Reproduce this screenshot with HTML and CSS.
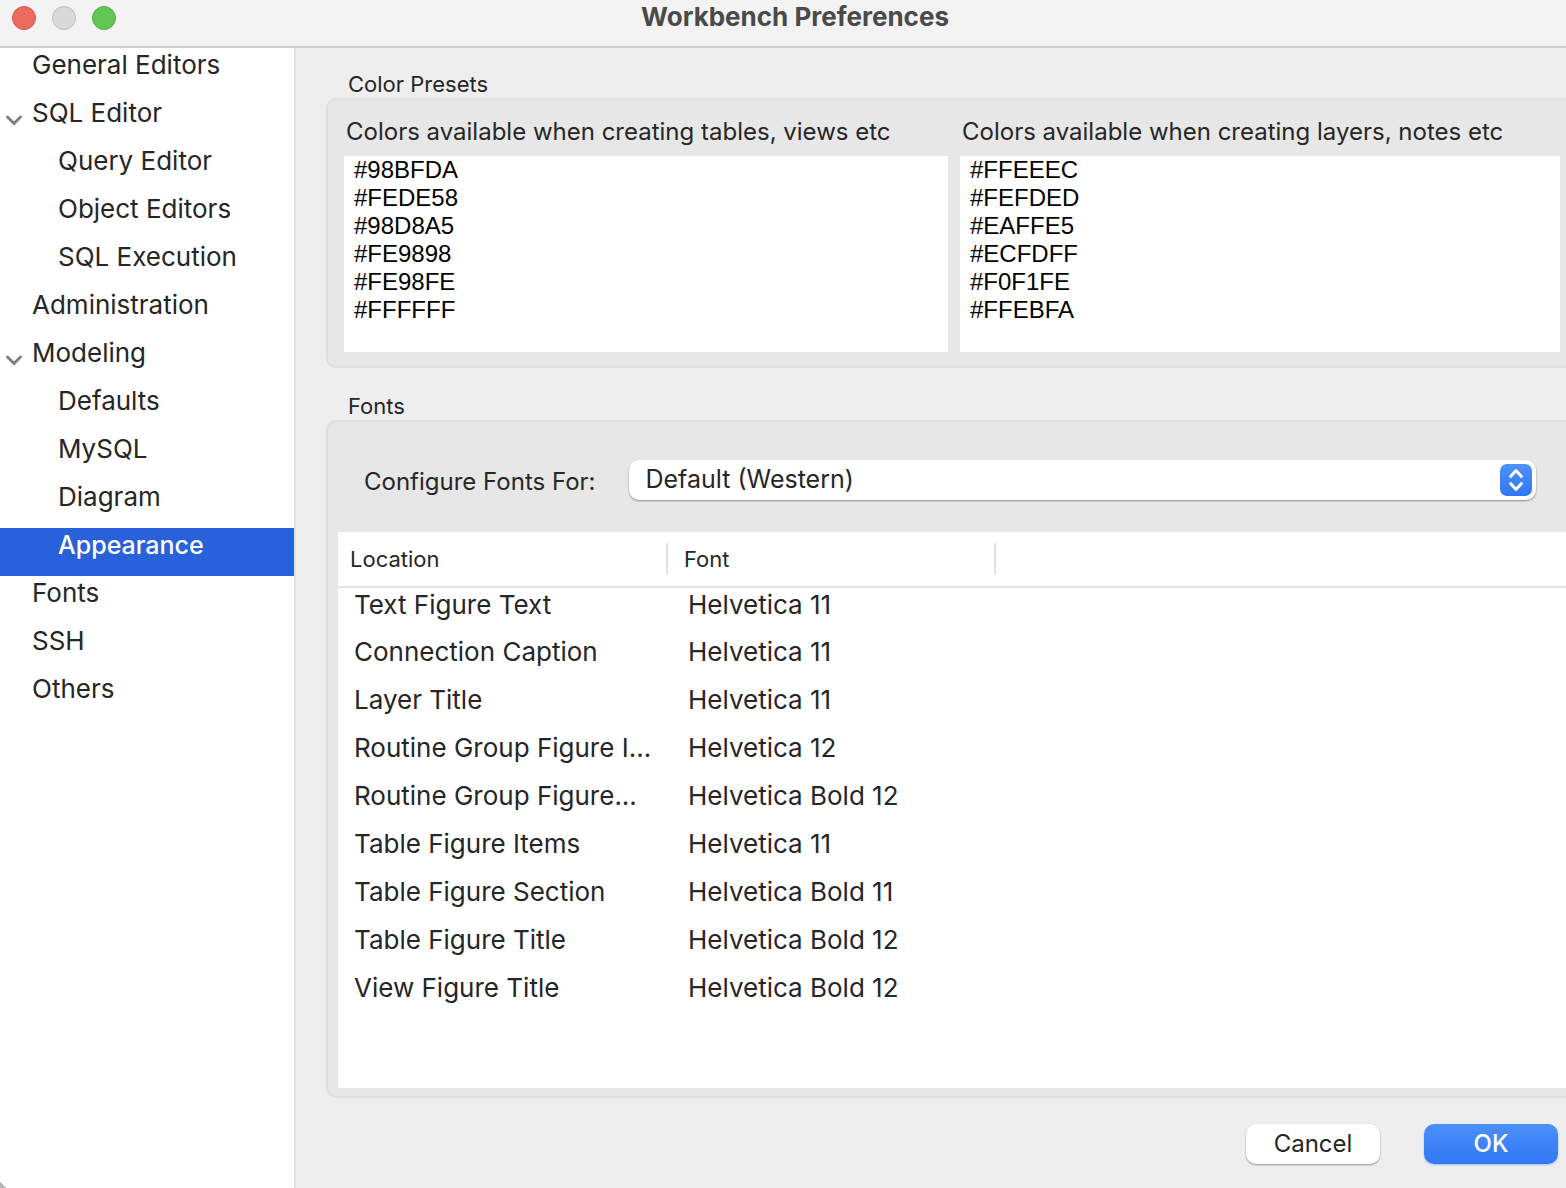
FILE: index.html
```html
<!DOCTYPE html>
<html lang="en">
<head>
<meta charset="utf-8">
<meta name="viewport" content="width=device-width, initial-scale=1">
<title>Workbench Preferences</title>
<link rel="stylesheet" href="styles.css">
</head>
<body>
<div class="window">
  <header class="titlebar">
    <div class="lights">
      <button class="light light-close" type="button" aria-label="Close"></button>
      <button class="light light-minimize" type="button" aria-label="Minimize" disabled></button>
      <button class="light light-zoom" type="button" aria-label="Zoom"></button>
    </div>
    <h1 class="title">Workbench Preferences</h1>
  </header>
  <div class="body">
    <nav class="sidebar" aria-label="Preference pages">
      <ul class="tree">
        <li><div class="row"><a href="#general">General Editors</a></div></li>
        <li>
          <div class="row">
            <button class="toggle" type="button" aria-label="Collapse SQL Editor" aria-expanded="true"><svg viewBox="0 0 18 12" width="18" height="12"><path d="M2.500 3 9 9.500 15.500 3"/></svg></button>
            <a href="#sql">SQL Editor</a>
          </div>
          <ul class="tree subtree">
            <li><div class="row"><a href="#query">Query Editor</a></div></li>
            <li><div class="row"><a href="#object">Object Editors</a></div></li>
            <li><div class="row"><a href="#execution">SQL Execution</a></div></li>
          </ul>
        </li>
        <li><div class="row"><a href="#administration">Administration</a></div></li>
        <li>
          <div class="row">
            <button class="toggle" type="button" aria-label="Collapse Modeling" aria-expanded="true"><svg viewBox="0 0 18 12" width="18" height="12"><path d="M2.500 3 9 9.500 15.500 3"/></svg></button>
            <a href="#modeling">Modeling</a>
          </div>
          <ul class="tree subtree">
            <li><div class="row"><a href="#defaults">Defaults</a></div></li>
            <li><div class="row"><a href="#mysql">MySQL</a></div></li>
            <li><div class="row"><a href="#diagram">Diagram</a></div></li>
            <li><div class="row selected"><a href="#appearance" aria-current="page">Appearance</a></div></li>
          </ul>
        </li>
        <li><div class="row"><a href="#fonts">Fonts</a></div></li>
        <li><div class="row"><a href="#ssh">SSH</a></div></li>
        <li><div class="row"><a href="#others">Others</a></div></li>
      </ul>
    </nav>
    <main class="content">
      <section class="group">
        <h2 class="group-title">Color Presets</h2>
        <div class="panel presets">
          <div class="preset">
            <label for="table-colors">Colors available when creating tables, views etc</label>
            <textarea id="table-colors" spellcheck="false">#98BFDA
#FEDE58
#98D8A5
#FE9898
#FE98FE
#FFFFFF</textarea>
          </div>
          <div class="preset">
            <label for="layer-colors">Colors available when creating layers, notes etc</label>
            <textarea id="layer-colors" spellcheck="false">#FFEEEC
#FEFDED
#EAFFE5
#ECFDFF
#F0F1FE
#FFEBFA</textarea>
          </div>
        </div>
      </section>
      <section class="group group-fonts">
        <h2 class="group-title">Fonts</h2>
        <div class="panel fonts">
          <div class="font-picker">
            <label for="font-set">Configure Fonts For:</label>
            <div class="popup">
              <select id="font-set"><option>Default (Western)</option></select>
              <svg class="popup-arrows" viewBox="0 0 32 32" width="32" height="32" aria-hidden="true">
                <defs><linearGradient id="arrows-fill" x1="0" y1="0" x2="0" y2="1"><stop offset="0" stop-color="#4b91f8"/><stop offset="1" stop-color="#3076f6"/></linearGradient></defs>
                <rect width="32" height="32" rx="7" fill="url(#arrows-fill)"/>
                <path d="M10.500 12.500 16 6.500 21.500 12.500M10.500 19.500 16 25.500 21.500 19.500" fill="none" stroke="#fff" stroke-width="3" stroke-linecap="round" stroke-linejoin="round"/>
              </svg>
            </div>
          </div>
          <div class="list">
            <table>
              <colgroup><col class="col-location"><col class="col-font"><col></colgroup>
              <thead><tr><th scope="col"><div>Location</div></th><th scope="col"><div>Font</div></th><td></td></tr></thead>
              <tbody>
                <tr><td>Text Figure Text</td><td>Helvetica 11</td><td></td></tr>
                <tr><td>Connection Caption</td><td>Helvetica 11</td><td></td></tr>
                <tr><td>Layer Title</td><td>Helvetica 11</td><td></td></tr>
                <tr><td>Routine Group Figure I...</td><td>Helvetica 12</td><td></td></tr>
                <tr><td>Routine Group Figure...</td><td>Helvetica Bold 12</td><td></td></tr>
                <tr><td>Table Figure Items</td><td>Helvetica 11</td><td></td></tr>
                <tr><td>Table Figure Section</td><td>Helvetica Bold 11</td><td></td></tr>
                <tr><td>Table Figure Title</td><td>Helvetica Bold 12</td><td></td></tr>
                <tr><td>View Figure Title</td><td>Helvetica Bold 12</td><td></td></tr>
              </tbody>
            </table>
          </div>
        </div>
      </section>
      <footer class="actions">
        <button class="btn" type="button">Cancel</button>
        <button class="btn btn-primary" type="submit">OK</button>
      </footer>
    </main>
  </div>
</div>
</body>
</html>
```
FILE: styles.css
```css
* { box-sizing: border-box; }

body {
  margin: 0;
  background: #eeeeee;
  color: #262626;
  font: 26px/34px Inter, "Liberation Sans", sans-serif;
}

h1, h2, ul { margin: 0; padding: 0; }
button, select { font: inherit; color: inherit; }

.window { display: flex; flex-direction: column; min-height: 100vh; }

/* Title bar */
.titlebar {
  display: grid;
  grid-template-columns: 1fr auto 1fr;
  height: 48px;
  padding: 0 0 0 12px;
  background: #f3f3f3;
  border-bottom: 2px solid #cdcdcd;
}
.lights { display: flex; gap: 16px; padding-top: 6px; }
.light { width: 24px; height: 24px; padding: 0; border: 1px solid; border-radius: 50%; }
.light-close { background: #ed6a5f; border-color: #d9564c; }
.light-minimize { background: #d9d9d9; border-color: #bdbdbd; }
.light-zoom { background: #62c655; border-color: #51b143; }
.title { margin-left: 12px; color: #4a4a4a; font-size: 26px; font-weight: 700; line-height: 34px; }

.body { display: flex; flex: 1; }

/* Page tree */
.sidebar {
  flex: none;
  width: 296px;
  border-right: 2px solid #e2e2e2;
  background: linear-gradient(45deg, #b4b4b4 4px, #ffffff 5px);
}
.tree { list-style: none; }
.row { display: flex; height: 48px; padding-left: 32px; }
.subtree .row { padding-left: 58px; }
.row a { color: inherit; text-decoration: none; }
.row.selected { background: #2861d9; color: #ffffff; font-size: 25px; font-weight: 500; }
.toggle {
  display: flex;
  width: 18px;
  margin: 0 9px 0 -27px;
  padding: 18px 0 0;
  border: 0;
  background: none;
}
.toggle path { fill: none; stroke: #808080; stroke-width: 3; stroke-linecap: round; stroke-linejoin: round; }

/* Settings groups */
.content { display: flex; flex: 1; flex-direction: column; min-width: 0; padding: 22px 0 0 30px; }
.group-title { padding-left: 22px; font-size: 22px; font-weight: 400; line-height: 28px; }
.group-fonts { display: flex; flex: 1; flex-direction: column; margin-top: 24px; }
.panel {
  border: 2px solid #dfdfdf;
  border-right: 0;
  border-radius: 10px 0 0 10px;
  background: #e7e7e7;
}
.presets { display: grid; grid-template-columns: 151fr 150fr; gap: 12px; padding: 16px 6px 14px 16px; }
.preset { display: flex; flex-direction: column; min-width: 0; }
.preset label { height: 40px; padding-left: 2px; font-size: 24px; line-height: 32px; white-space: nowrap; }
.preset textarea {
  height: 196px;
  padding: 0 10px;
  border: 0;
  background: #ffffff;
  color: #000000;
  font: 24px/28px "Liberation Sans", Arial, sans-serif;
  resize: none;
}

.fonts { display: flex; flex: 1; flex-direction: column; padding: 38px 0 8px 10px; }
.font-picker { display: flex; gap: 34px; align-items: center; padding: 0 30px 32px 26px; font-size: 24px; }
.font-picker label { padding-top: 4px; }
.popup { display: grid; flex: 1; align-items: center; }
.popup select {
  grid-area: 1 / 1;
  width: 100%;
  height: 40px;
  padding: 0 48px 2px 16px;
  border: 0;
  border-radius: 10px;
  background: #ffffff;
  box-shadow: 0 1px 2px #00000066;
  font-size: 25px;
  appearance: none;
}
.popup-arrows { grid-area: 1 / 1; justify-self: end; margin-right: 4px; pointer-events: none; }

.list { flex: 1; background: #ffffff; }
table { width: 100%; table-layout: fixed; border-collapse: collapse; }
.col-location { width: 330px; }
.col-font { width: 328px; }
thead tr { height: 55px; border-bottom: 2px solid #e4e4e4; }
th { padding: 0; font-size: 22px; font-weight: 400; text-align: left; }
th div { padding-left: 12px; border-right: 2px solid #e2e2e2; line-height: 32px; }
th + th div { padding-left: 16px; }
tbody td { height: 48px; padding: 0 0 0 16px; vertical-align: top; white-space: nowrap; }
tbody td + td { padding-left: 20px; }

/* Dialog buttons */
.actions { display: flex; justify-content: flex-end; gap: 44px; padding: 26px 8px 24px; }
.btn {
  width: 134px;
  height: 40px;
  padding: 0;
  border: 0;
  border-radius: 10px;
  background: #ffffff;
  box-shadow: 0 1px 2px #00000066;
  font-size: 24px;
}
.btn-primary {
  background: linear-gradient(#4a90f8, #3277f6);
  box-shadow: 0 1px 2px #3277f666;
  color: #ffffff;
  font-weight: 500;
}
```
